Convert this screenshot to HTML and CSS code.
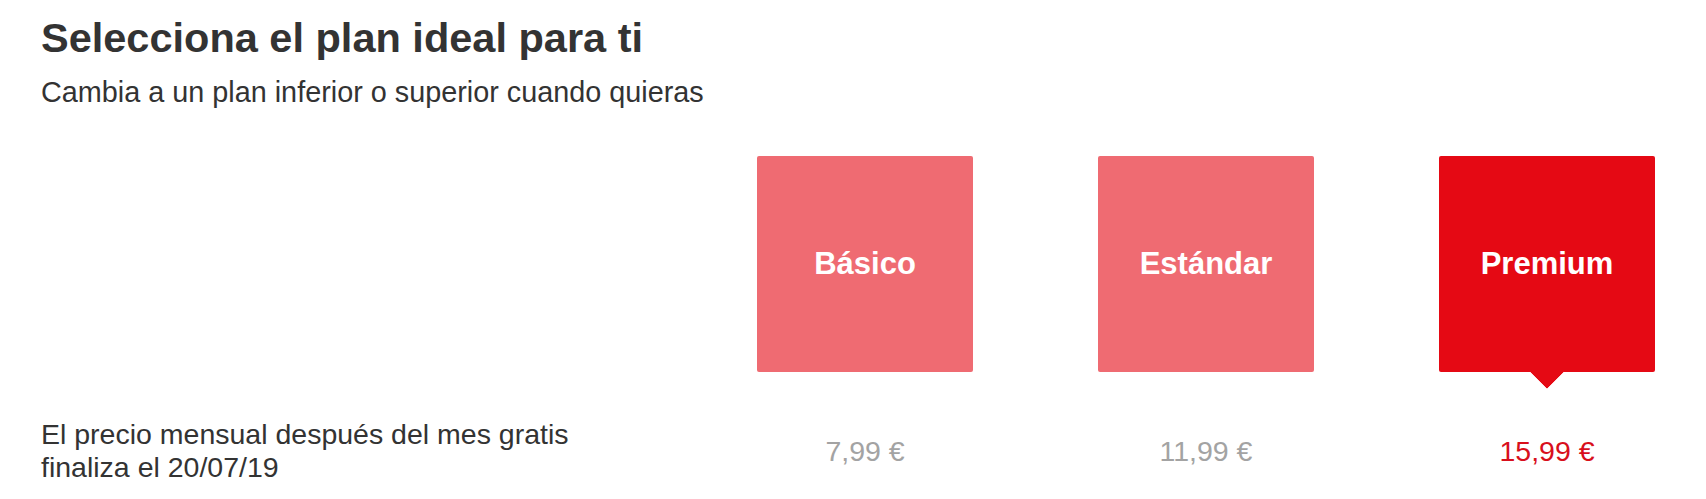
FILE: index.html
```html
<!DOCTYPE html>
<html lang="es">
<head>
<meta charset="utf-8">
<title>Selecciona el plan ideal para ti</title>
<link rel="stylesheet" href="styles.css">
</head>
<body>
<div class="page">
  <h1 class="title">Selecciona el plan ideal para ti</h1>
  <p class="subtitle">Cambia a un plan inferior o superior cuando quieras</p>
  <div class="plans">
    <div class="spacer"></div>
    <div class="plan">Básico</div>
    <div class="plan">Estándar</div>
    <div class="plan plan-selected">Premium</div>
    <div class="row-label">El precio mensual después del mes gratis<br>finaliza el 20/07/19</div>
    <div class="price">7,99 €</div>
    <div class="price">11,99 €</div>
    <div class="price price-selected">15,99 €</div>
  </div>
</div>
</body>
</html>
```
FILE: styles.css
```css
html, body {
  margin: 0;
  padding: 0;
  background: #ffffff;
}
body {
  font-family: "Liberation Sans", Arial, sans-serif;
  color: #333333;
}
.page {
  padding: 14px 0 0 41px;
}
.title {
  margin: 0;
  font-size: 41.5px;
  line-height: 48px;
  font-weight: 700;
  color: #333333;
}
.subtitle {
  margin: 13px 0 0 0;
  font-size: 28.8px;
  line-height: 34px;
  color: #333333;
}
.plans {
  display: grid;
  grid-template-columns: 591px repeat(3, 216px);
  column-gap: 125px;
  margin-top: 47px;
}
.plan {
  height: 216px;
  border-radius: 2px;
  background: #ef6b72;
  color: #ffffff;
  font-weight: 700;
  font-size: 31px;
  display: flex;
  align-items: center;
  justify-content: center;
  position: relative;
}
.plan-selected {
  background: #e50914;
}
.plan-selected::after {
  content: "";
  position: absolute;
  left: 50%;
  bottom: -12px;
  width: 24px;
  height: 24px;
  margin-left: -12px;
  background: #e50914;
  transform: rotate(45deg);
  clip-path: polygon(100% 0, 100% 100%, 0 100%);
}
.row-label {
  margin-top: 46px;
  font-size: 28.5px;
  line-height: 33px;
  color: #333333;
  align-self: center;
  white-space: nowrap;
}
.price {
  margin-top: 46px;
  align-self: center;
  text-align: center;
  font-size: 28.5px;
  line-height: 33px;
  color: #a3a3a3;
}
.price-selected {
  color: #d80f1c;
}
```
